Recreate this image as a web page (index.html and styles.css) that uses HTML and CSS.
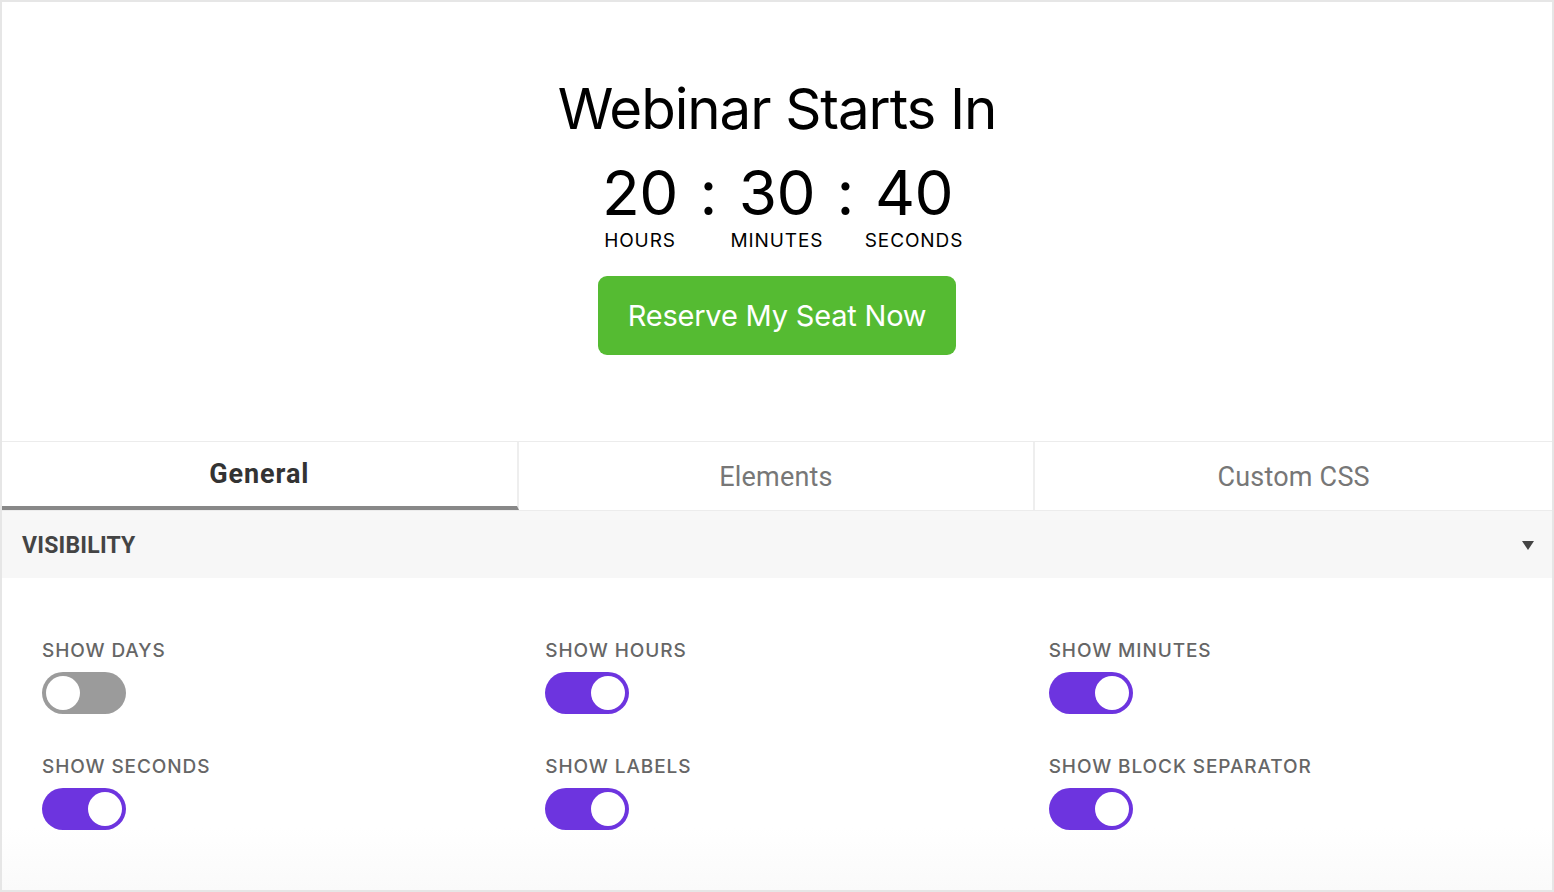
FILE: index.html
```html
<!DOCTYPE html>
<html>
<head>
<meta charset="utf-8">
<link rel="stylesheet" href="styles.css">
</head>
<body>
<div class="frame">
  <section class="hero">
    <h1 class="title">Webinar Starts In</h1>
    <div class="countdown">
      <div class="unit"><span class="num">20</span><span class="lbl">HOURS</span></div>
      <div class="sep">:</div>
      <div class="unit"><span class="num">30</span><span class="lbl">MINUTES</span></div>
      <div class="sep">:</div>
      <div class="unit"><span class="num">40</span><span class="lbl">SECONDS</span></div>
    </div>
    <button class="cta">Reserve My Seat Now</button>
  </section>
  <nav class="tabs">
    <div class="tab active">General</div>
    <div class="tab">Elements</div>
    <div class="tab">Custom CSS</div>
  </nav>
  <div class="section-head">
    <span class="section-title">VISIBILITY</span>
    <span class="caret"></span>
  </div>
  <div class="settings">
    <div class="setting"><span class="setting-label">SHOW DAYS</span><span class="toggle"></span></div>
    <div class="setting"><span class="setting-label">SHOW HOURS</span><span class="toggle on"></span></div>
    <div class="setting"><span class="setting-label">SHOW MINUTES</span><span class="toggle on"></span></div>
    <div class="setting"><span class="setting-label">SHOW SECONDS</span><span class="toggle on"></span></div>
    <div class="setting"><span class="setting-label">SHOW LABELS</span><span class="toggle on"></span></div>
    <div class="setting"><span class="setting-label">SHOW BLOCK SEPARATOR</span><span class="toggle on"></span></div>
  </div>
</div>
</body>
</html>
```
FILE: styles.css
```css
* { box-sizing: border-box; }
html, body { margin: 0; padding: 0; background: #fff; }
body { font-family: "Inter", "Liberation Sans", sans-serif; color: #000; }

.frame {
  width: 1554px;
  height: 892px;
  border: 2px solid #e6e6e6;
  overflow: hidden;
  display: flex;
  flex-direction: column;
}

.hero {
  height: 439px;
  padding-top: 75px;
  display: flex;
  flex-direction: column;
  align-items: center;
}
.title {
  margin: 0;
  font-weight: 400;
  font-size: 56.5px;
  line-height: 64px;
  letter-spacing: -1.1px;
  color: #000;
}
.countdown {
  margin-top: 20px;
  display: flex;
  align-items: flex-start;
}
.unit {
  width: 100px;
  display: flex;
  flex-direction: column;
  align-items: center;
}
.num {
  font-size: 62px;
  line-height: 64px;
  letter-spacing: -0.5px;
}
.lbl {
  margin-top: 4px;
  font-size: 19px;
  line-height: 24px;
  letter-spacing: 0.9px;
}
.sep {
  width: 37px;
  text-align: center;
  font-size: 62px;
  line-height: 64px;
}
.cta {
  margin-top: 23px;
  width: 358px;
  height: 79px;
  border: 0;
  border-radius: 9px;
  background: #55bb32;
  color: #fff;
  font-family: "Inter", "Liberation Sans", sans-serif;
  font-size: 29px;
  letter-spacing: -0.2px;
  padding: 0;
}

.tabs {
  display: grid;
  grid-template-columns: 1fr 1fr 1fr;
  border-top: 1px solid #ececec;
  border-bottom: 1px solid #ececec;
  height: 70px;
}
.tab {
  display: flex;
  align-items: center;
  justify-content: center;
  font-family: "Roboto", sans-serif;
  font-size: 27px;
  letter-spacing: 0.2px;
  color: #777;
  border-right: 2px solid #eeeeee;
  padding-top: 2px;
}
.tab:last-child { border-right: 0; }
.tab.active {
  color: #333;
  font-weight: 700;
  letter-spacing: 0.9px;
  border-bottom: 4px solid #888;
  padding-top: 0;
}

.section-head {
  height: 67px;
  background: #f7f7f7;
  display: flex;
  align-items: center;
  justify-content: space-between;
  padding: 2px 18px 0 20px;
}
.section-title {
  font-family: "Roboto", sans-serif;
  font-weight: 700;
  font-size: 23px;
  color: #444;
  letter-spacing: 0.2px;
}
.caret {
  width: 0;
  height: 0;
  border-left: 6px solid transparent;
  border-right: 6px solid transparent;
  border-top: 9px solid #444;
}

.settings {
  flex: 1;
  padding: 61px 0 0 40px;
  display: grid;
  grid-template-columns: repeat(3, 1fr);
  grid-auto-rows: min-content;
  row-gap: 41px;
  background: linear-gradient(to bottom, #fff 0, #fff 80%, #fafafa 100%);
}
.setting {
  display: flex;
  flex-direction: column;
  align-items: flex-start;
}
.setting-label {
  font-size: 19px;
  font-weight: 500;
  line-height: 24px;
  color: #666;
  letter-spacing: 0.9px;
}
.toggle {
  margin-top: 9px;
  width: 84px;
  height: 42px;
  border-radius: 21px;
  background: #9b9b9b;
  position: relative;
}
.toggle::after {
  content: "";
  position: absolute;
  top: 4px;
  left: 4px;
  width: 34px;
  height: 34px;
  border-radius: 50%;
  background: #fff;
}
.toggle.on { background: #6d34df; }
.toggle.on::after { left: 46px; }
```
